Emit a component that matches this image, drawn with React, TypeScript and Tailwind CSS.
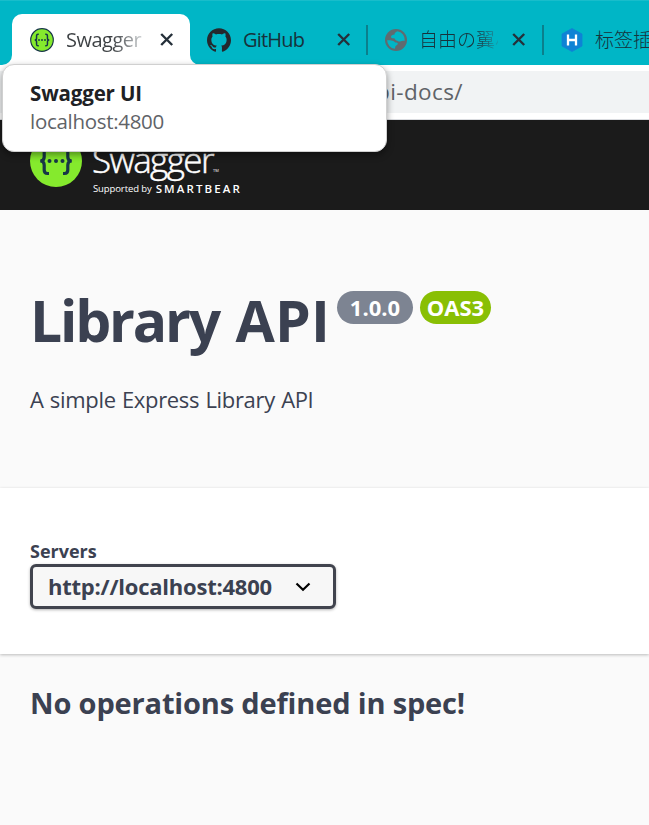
import React from "react";
import { SiGithub } from "react-icons/si";

function CloseIcon() {
  return (
    <svg width="14" height="14" viewBox="0 0 14 14" className="shrink-0" fill="none" stroke="#25303a" strokeWidth="2.4">
      <path d="M1.2 1 12.2 12M12.2 1 1.2 12" />
    </svg>
  );
}

function SwaggerMark({ className, ring }: { className: string; ring?: boolean }) {
  return (
    <svg viewBox="0 0 52 52" className={className}>
      <circle cx="26" cy="26" r={ring ? 24.5 : 26} fill="#85ea2d" stroke={ring ? "#173647" : "none"} strokeWidth={ring ? 2.5 : 0} />
      <g fill="none" stroke="#173647" strokeWidth="3.2">
        <path d="M19 13.5h-1.5c-2.5 0-3.3 1.2-3.3 3.5v5c0 2.4-1.2 4-4 4 2.8 0 4 1.6 4 4v5c0 2.3.8 3.5 3.3 3.5H19" />
        <path d="M33 13.5h1.5c2.5 0 3.3 1.2 3.3 3.5v5c0 2.4 1.2 4 4 4-2.8 0-4 1.6-4 4v5c0 2.3-.8 3.5-3.3 3.5H33" />
      </g>
      <g fill="#173647">
        <circle cx="19.5" cy="26" r="2" />
        <circle cx="26" cy="26" r="2" />
        <circle cx="32.5" cy="26" r="2" />
      </g>
    </svg>
  );
}

function GlobeIcon() {
  return (
    <svg width="22" height="22" viewBox="0 0 22 22" className="shrink-0">
      <circle cx="11" cy="11" r="11" fill="#5f6b70" />
      <path
        fill="#00b6c6"
        d="M12.3 2.2c-1.8 1.2-3 1.7-2.7 3.3-2 .2-3.7 1.2-3.6 2.5.1 1.1 1.5 1.3 2.7 1.2 1.6-.1 1.2 1.7 2.7 2.2 1.6.5 2.6 1.4 4.5.8 1.4-.5 2.7-.3 3.9-.4A8.9 8.9 0 0 0 12.3 2.2Z"
      />
      <path
        fill="#00b6c6"
        d="M2.1 11.3c1.5-.3 4.6-.2 6.2.6 1.3.6 1.5 1.6 3 1.7 1.4.1 1.9.9 1.2 2-.6 1-1.9 1.1-2.2 2.2-.2.8-.1 1.3-.5 2A9 9 0 0 1 2.1 11.3Z"
      />
    </svg>
  );
}

function HexIcon() {
  return (
    <svg width="22" height="24" viewBox="0 0 22 24" className="shrink-0">
      <path d="M11 .5 21 6v12l-10 5.5L1 18V6Z" fill="#0e83d5" stroke="#0e83d5" strokeWidth=".8" strokeLinejoin="round" />
      <path d="M7 6.5v11M15 6.5v11M7 12h8" fill="none" stroke="#fff" strokeWidth="2.3" />
    </svg>
  );
}

function TabStrip() {
  return (
    <div className="flex h-[65px] shrink-0 items-start border-t border-[#18bdcb] bg-[#00b6c6] pl-3 pt-[13px] text-[20px] leading-[50px] text-[#17323b]">
      <div className="relative flex h-[51px] w-[178px] shrink-0 items-center rounded-t-[10px] bg-white pl-[18px]">
        <svg className="absolute -left-[10px] bottom-0" width="10" height="10">
          <path d="M10 0v10H0A10 10 0 0 0 10 0Z" fill="#fff" />
        </svg>
        <svg className="absolute -right-[10px] bottom-0" width="10" height="10">
          <path d="M0 0v10h10A10 10 0 0 1 0 0Z" fill="#fff" />
        </svg>
        <SwaggerMark ring className="size-6 shrink-0" />
        <span className="ml-3 w-[77px] shrink-0 whitespace-nowrap bg-gradient-to-r from-[#3c4043] from-60% to-[#d5d8da] bg-clip-text tracking-[-0.5px] text-transparent">
          Swagger
        </span>
        <span className="ml-[17px] flex"><CloseIcon /></span>
      </div>
      <div className="flex h-[51px] w-[176px] shrink-0 items-center pl-[17px]">
        <SiGithub size={24} color="#24292e" className="shrink-0" />
        <span className="ml-3 w-[94px] tracking-[-0.8px]">GitHub</span>
        <CloseIcon />
      </div>
      <div className="flex h-[51px] w-[176px] shrink-0 items-center">
        <div className="h-[30px] w-[1.5px] bg-[#0b7f8c]" />
        <span className="ml-[17.5px] flex"><GlobeIcon /></span>
        <span className="ml-[12px] w-[79px] shrink-0 overflow-hidden whitespace-nowrap bg-gradient-to-r from-[#17323b] from-75% to-[#00b6c6] to-105% bg-clip-text text-[19px] font-light text-transparent">
          自由の翼小
        </span>
        <span className="ml-[14px] flex"><CloseIcon /></span>
      </div>
      <div className="flex h-[51px] min-w-0 flex-1 items-center overflow-hidden">
        <div className="h-[30px] w-[1.5px] shrink-0 bg-[#0b7f8c]" />
        <span className="ml-[17px] flex shrink-0"><HexIcon /></span>
        <span className="ml-[12.5px] shrink-0 whitespace-nowrap text-[19px] font-light">标签插</span>
      </div>
    </div>
  );
}

function Tooltip() {
  return (
    <div className="absolute left-[2px] top-[64px] z-10 h-[88px] w-[385px] rounded-[12px] border border-[#d0d0d0] bg-white pl-[27px] pt-[14px] shadow-[0_3px_7px_rgba(0,0,0,0.4)]">
      <div className="h-7 text-[20.5px] font-bold leading-7 tracking-[-0.15px] text-[#202124]">Swagger UI</div>
      <div className="h-7 text-[20.5px] leading-7 tracking-[-0.3px] text-[#5f6368]">localhost:4800</div>
    </div>
  );
}

export default function App() {
  return (
    <div className="relative flex h-[825px] w-[649px] flex-col overflow-hidden bg-[#fafafa] font-['Open_Sans','Noto_Sans_CJK_SC',sans-serif] text-[#3b4151]">
      <TabStrip />
      <div className="h-[55px] shrink-0 border-b border-[#dadce0] bg-white pt-[6px]">
        <div className="h-[42px] bg-[#f1f3f4] pl-[376px] text-[22.5px] leading-[42px] tracking-[0.4px] text-[#5f6368]">pi-docs/</div>
      </div>
      <Tooltip />
      <header className="flex h-[90px] shrink-0 bg-[#1b1b1b] pl-[30px] text-white">
        <SwaggerMark className="mt-[15px] size-[52px] shrink-0" />
        <div className="ml-[10px] pt-[20px]">
          <div className="flex h-[42px] items-start">
            <span className="text-[35px] font-light leading-[39px] tracking-[-1.6px] [-webkit-text-stroke:0.5px_#fff]">Swagger</span>
            <span className="mt-[28px] text-[4px] leading-[6px]">TM</span>
          </div>
          <div className="flex h-[14px] items-center whitespace-nowrap pl-px leading-[14px]">
            <span className="text-[9.5px] tracking-[-0.1px]">Supported by</span>
            <span className="ml-1 text-[11.5px] font-semibold tracking-[2.1px]">SMARTBEAR</span>
          </div>
        </div>
      </header>
      <section className="h-[278px] shrink-0 pl-[30px] pt-[80px]">
        <div className="flex h-[64px] items-start whitespace-nowrap">
          <h1 className="w-[307px] text-[57px] font-bold leading-[61px] tracking-[-2.2px] [word-spacing:4px]">
            Library <span className="tracking-[0.2px]">API</span>
          </h1>
          <span className="mt-px flex h-[33px] w-[76px] items-center justify-center rounded-full bg-[#7d8492] text-[22px] font-bold text-white">1.0.0</span>
          <span className="ml-[7px] mt-px flex h-[33px] w-[71px] items-center justify-center rounded-full bg-[#89bf04] text-[22px] font-bold text-white">OAS3</span>
        </div>
        <p className="mt-[30px] text-[22px] leading-[30px] tracking-[-0.33px] [word-spacing:0.9px]">A simple Express Library API</p>
      </section>
      <section className="h-[166px] shrink-0 bg-white pl-[30px] pt-[51px] shadow-[0_1px_3px_rgba(0,0,0,0.25)]">
        <div className="h-[25px] text-[18px] font-bold leading-[25px]">Servers</div>
        <div className="flex h-[45px] w-[306px] items-center rounded-[6px] border-[3px] border-[#41444e] bg-[#f7f7f7] pl-[15px] shadow-[0_1px_3px_rgba(0,0,0,0.3)]">
          <span className="w-[247px] whitespace-nowrap text-[22px] font-bold tracking-[-0.23px]">http://localhost:4800</span>
          <svg width="16" height="10" viewBox="0 0 16 10" fill="none" stroke="#000" strokeWidth="2.2">
            <path d="m1.5 1.5 6.5 6.3 6.5-6.3" />
          </svg>
        </div>
      </section>
      <h3 className="mt-[29px] pl-[30px] text-[29px] font-bold leading-10 tracking-[-0.16px]">No operations defined in spec!</h3>
    </div>
  );
}
